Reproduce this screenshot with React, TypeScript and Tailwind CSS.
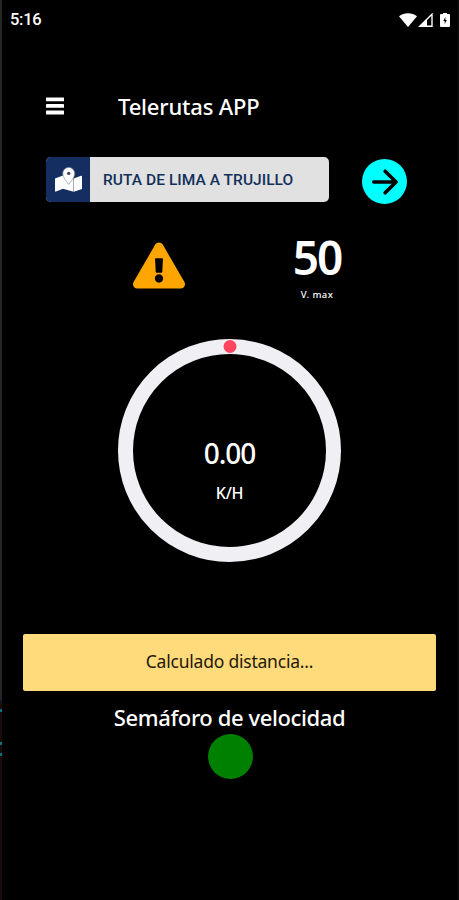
import { FaExclamationTriangle } from "react-icons/fa";

const MenuIcon = () => (
  <svg className="h-[18px] w-[18px]" viewBox="0 0 18 18" fill="currentColor">
    <rect y="0.5" width="18" height="3.8" rx="0.4" />
    <rect y="7" width="18" height="3.8" rx="0.4" />
    <rect y="13.6" width="18" height="3.8" rx="0.4" />
  </svg>
);

const MapIcon = () => (
  <svg className="h-[25px] w-[27px]" viewBox="0 0 27 25" fill="#fff">
    <path d="M0 11.5L8 8.6V21.8L1 24.6Q0 24.8 0 23.8Z" />
    <path d="M8 8.6L18.5 11.5V24.8L8 21.8Z" />
    <path d="M18.8 11.5L26 8.7Q27 8.4 27 9.4V21.9L18.8 24.8Z" />
    <path
      d="M13.7 17.4C11 14 7.8 10.3 7.8 6.4a5.9 6 0 0 1 11.8 0c0 3.9-3.2 7.6-5.9 11z"
      stroke="#8c95a8"
      strokeWidth="0.7"
    />
    <circle cx="13.7" cy="6.4" r="1.7" fill="#3f4c69" />
  </svg>
);

const StatusBar = () => (
  <div className="flex h-10 items-center justify-between pr-[7px] pl-[8px]">
    <span className="pt-[1px] font-['Roboto'] text-[16.5px] leading-none font-medium tracking-[-0.3px]">5:16</span>
    <div className="flex items-center">
      <svg className="h-[14px] w-[18px]" viewBox="0 0 18 14" fill="currentColor">
        <path d="M0 3.2C5-.7 13-.7 18 3.2L9 14Z" />
      </svg>
      <svg className="ml-[1px] h-[14px] w-[15px]" viewBox="0 0 15 14">
        <path d="M1.8 13.2L14 1.2V13.2Z" fill="none" stroke="currentColor" strokeWidth="1.4" />
        <path d="M1 13.6L9 5.8V13.6Z" fill="currentColor" />
      </svg>
      <svg className="ml-[7px] h-[14px] w-[10px]" viewBox="0 0 10 14">
        <path
          d="M3 0h4v1h2q1 0 1 1V13q0 1-1 1H1q-1 0-1-1V2q0-1 1-1h2z"
          fill="currentColor"
        />
        <path d="M5.4 4L3.3 8h1.4v3L6.8 7H5.4z" fill="#000" />
      </svg>
    </div>
  </div>
);

const Header = () => (
  <header className="mt-[50px] flex h-8 items-center pl-[44px]">
    <MenuIcon />
    <h1 className="ml-[54px] text-[22px] leading-8 font-medium tracking-[-0.18px] whitespace-nowrap">
      Telerutas APP
    </h1>
  </header>
);

const RoutePicker = () => (
  <div className="mt-[35px] flex h-[48px] items-start pl-[44px]">
    <div className="flex h-[45px] w-[283px] overflow-hidden rounded-[5px] bg-[#e1e1e1]">
      <div className="flex w-[44px] items-center justify-center bg-[#152e61]">
        <MapIcon />
      </div>
      <span className="pl-[13px] font-['Roboto'] text-[15.5px] leading-[46px] font-medium tracking-[0.05px] whitespace-nowrap text-[#12305a]">
        RUTA DE LIMA A TRUJILLO
      </span>
    </div>
    <button className="mt-[2px] ml-[33px] flex size-[45px] items-center justify-center rounded-full bg-[#00ffff]">
      <svg className="h-[26px] w-[26px]" viewBox="0 0 26 26" fill="none">
        <path
          d="M1.8 13H24M13.2 2.2L24 13L13.2 23.8"
          stroke="#000"
          strokeWidth="3.6"
          strokeLinecap="round"
          strokeLinejoin="round"
        />
      </svg>
    </button>
  </div>
);

const SpeedLimit = () => (
  <div className="mt-[30px] flex h-[72px] pl-[131px]">
    <FaExclamationTriangle className="mt-[7px] h-[47px] w-[52px] text-[#ffa500]" />
    <div className="ml-[100px] flex w-[64px] flex-col items-center">
      <span className="text-[46px] leading-[44px] font-semibold tracking-[-2px]">50</span>
      <span className="mt-[9px] text-[9.5px] leading-[13px] font-medium tracking-[0.4px]">V. max</span>
    </div>
  </div>
);

const Speedometer = () => (
  <div className="relative mt-[32px] ml-[116px] flex size-[223px] flex-col items-center rounded-full border-[15px] border-[#f0eff4]">
    <span className="absolute -top-[14px] left-1/2 size-[13px] -translate-x-1/2 rounded-full bg-[#ff4560]" />
    <span className="mt-[80px] text-[28px] leading-[38px] font-medium tracking-[-1.1px]">0.00</span>
    <span className="mt-[11px] text-[16px] leading-[20px] font-medium tracking-[-0.3px]">K/H</span>
  </div>
);

// slice of the desktop that shows next to the phone window
const WindowEdge = () => (
  <div className="flex w-[2px] shrink-0 flex-col bg-[#1a0c08]">
    <div className="h-[700px] bg-[#252525]" />
    <div className="h-[3px] bg-[#181030]" />
    <div className="mt-[6px] h-[3px] bg-[#087080]" />
    <div className="mt-[30px] h-[3px] bg-[#087080]" />
    <div className="mt-[8px] h-[3px] bg-[#087080]" />
  </div>
);

export default function App() {
  return (
    <div className="flex h-[900px] w-[459px] overflow-hidden bg-black font-['Noto_Sans',sans-serif] text-white">
      <WindowEdge />
      <main className="flex w-[455px] flex-col">
        <StatusBar />
        <Header />
        <RoutePicker />
        <SpeedLimit />
        <Speedometer />
        <div className="mt-[72px] ml-[21px] flex h-[57px] w-[413px] items-center justify-center rounded-[2px] bg-[#ffdb7c] pb-[3px]">
          <p className="text-[17.5px] leading-6 tracking-[-0.22px] text-[#1f1808]">Calculado distancia...</p>
        </div>
        <h2 className="mt-[10px] text-center text-[22px] leading-8 font-medium tracking-[-0.4px]">
          Semáforo de velocidad
        </h2>
        <div className="mt-[1px] ml-[206px] size-[45px] rounded-full bg-[#008000]" />
      </main>
      <div className="w-[2px] bg-[#080808]" />
    </div>
  );
}
